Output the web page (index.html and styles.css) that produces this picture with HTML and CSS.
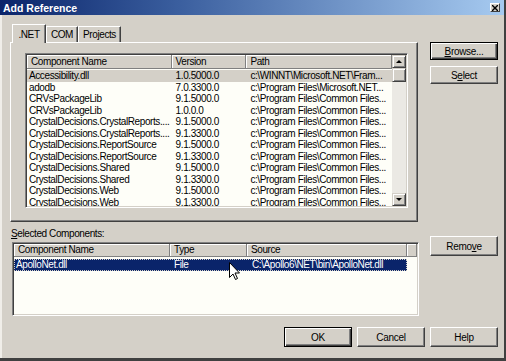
FILE: index.html
```html
<!DOCTYPE HTML>
<html>

<head>
  <meta charset="utf-8">
  <link rel="stylesheet" href="styles.css">
</head>

<body>
  <div class="window">
    <div class="titlebar">
      <span class="title">Add Reference</span>
      <span class="close">
        <svg width="6" height="6" viewBox="0 0 6 6"><path d="M0 0L6 6M6 0L0 6" stroke="#000" stroke-width="1.4"/></svg>
      </span>
    </div>

    <div class="content">
      <div class="top">
        <div class="tabs">
          <div class="tabstrip">
            <span class="tab active">.NET</span>
            <span class="tab com">COM</span>
            <span class="tab projects">Projects</span>
          </div>
          <div class="panel">
            <div class="list">
              <div class="listmain">
                <div class="row head">
                  <span class="c1">Component Name</span><span class="c2">Version</span><span class="c3">Path</span>
                </div>
                <div class="rows">
                  <div class="row grey"><span class="c1">Accessibility.dll</span><span class="c2">1.0.5000.0</span><span class="c3">c:\WINNT\Microsoft.NET\Fram...</span></div>
                  <div class="row"><span class="c1">adodb</span><span class="c2">7.0.3300.0</span><span class="c3">c:\Program Files\Microsoft.NET...</span></div>
                  <div class="row"><span class="c1">CRVsPackageLib</span><span class="c2">9.1.5000.0</span><span class="c3">c:\Program Files\Common Files...</span></div>
                  <div class="row"><span class="c1">CRVsPackageLib</span><span class="c2">1.0.0.0</span><span class="c3">c:\Program Files\Common Files...</span></div>
                  <div class="row"><span class="c1">CrystalDecisions.CrystalReports....</span><span class="c2">9.1.5000.0</span><span class="c3">c:\Program Files\Common Files...</span></div>
                  <div class="row"><span class="c1">CrystalDecisions.CrystalReports....</span><span class="c2">9.1.3300.0</span><span class="c3">c:\Program Files\Common Files...</span></div>
                  <div class="row"><span class="c1">CrystalDecisions.ReportSource</span><span class="c2">9.1.5000.0</span><span class="c3">c:\Program Files\Common Files...</span></div>
                  <div class="row"><span class="c1">CrystalDecisions.ReportSource</span><span class="c2">9.1.3300.0</span><span class="c3">c:\Program Files\Common Files...</span></div>
                  <div class="row"><span class="c1">CrystalDecisions.Shared</span><span class="c2">9.1.5000.0</span><span class="c3">c:\Program Files\Common Files...</span></div>
                  <div class="row"><span class="c1">CrystalDecisions.Shared</span><span class="c2">9.1.3300.0</span><span class="c3">c:\Program Files\Common Files...</span></div>
                  <div class="row"><span class="c1">CrystalDecisions.Web</span><span class="c2">9.1.5000.0</span><span class="c3">c:\Program Files\Common Files...</span></div>
                  <div class="row"><span class="c1">CrystalDecisions.Web</span><span class="c2">9.1.3300.0</span><span class="c3">c:\Program Files\Common Files...</span></div>
                </div>
              </div>
              <div class="scrollbar">
                <div class="sbtn"><span class="tri up"></span></div>
                <div class="thumb"></div>
                <div class="track"></div>
                <div class="sbtn"><span class="tri down"></span></div>
              </div>
            </div>
          </div>
        </div>
        <div class="side side-top">
          <button class="btn short default"><u>B</u>rowse...</button>
          <button class="btn short">S<u>e</u>lect</button>
        </div>
      </div>

      <div class="middle">
        <div class="selected">
          <div class="label"><u>S</u>elected Components:</div>
          <div class="list list2">
            <div class="row head">
              <span class="d1">Component Name</span><span class="d2">Type</span><span class="d3">Source</span><span class="d4"></span>
            </div>
            <div class="rows2">
              <div class="row picked"><span class="d1">ApolloNet.dll</span><span class="d2">File</span><span class="d3">C:\Apollo6\NET\bin\ApolloNet.dll</span></div>
            </div>
          </div>
        </div>
        <div class="side side-mid">
          <button class="btn">Remo<u>v</u>e</button>
        </div>
      </div>

      <div class="footer">
        <button class="btn default">OK</button>
        <button class="btn">Cancel</button>
        <button class="btn">Help</button>
      </div>
    </div>

    <svg class="cursor" width="12" height="19" viewBox="0 0 12 19">
      <path d="M0.5 0.5V15.5L4 12L6.5 17.5L8.5 16.5L6 11H10.5Z" fill="#fff" stroke="#000" stroke-width="1"/>
    </svg>
  </div>
</body>

</html>
```

FILE: styles.css
```css
body {
    margin: 0;
    font-family: "Liberation Sans", Arial, sans-serif;
    font-size: 10px;
    letter-spacing: -0.4px;
    color: #000;
}

.window {
    position: relative;
    width: 506px;
    height: 361px;
    box-sizing: border-box;
    background: #d4d0c8;
    border-right: 2px solid #404040;
    border-bottom: 3px solid #404040;
    overflow: hidden;
}

/* title bar */
.titlebar {
    height: 15px;
    display: flex;
    align-items: center;
    justify-content: space-between;
    padding: 0 3px 0 3px;
    background: linear-gradient(to right, #0a246a, #3a5e9e 35%, #a6caf0);
}
.title {
    color: #fff;
    font-weight: bold;
    font-size: 10.5px;
    letter-spacing: 0;
}
.close {
    width: 10px;
    height: 9px;
    box-sizing: border-box;
    background: #d4d0c8;
    border: 1px solid;
    border-color: #fff #404040 #404040 #fff;
    display: flex;
    align-items: center;
    justify-content: center;
    margin-right: 1px;
}

.content {
    height: 343px;
    box-sizing: border-box;
    border-left: 2px solid #f0eee9;
    padding: 9px 0 0 8px;
}

.top, .middle {
    display: flex;
    gap: 12px;
}

.side {
    display: flex;
    flex-direction: column;
    gap: 6px;
}
.side-top {
    padding-top: 18px;
}
.side-mid {
    padding-top: 14px;
}

/* buttons */
.btn {
    width: 68px;
    height: 20px;
    padding: 0;
    background: #d4d0c8;
    border: 1px solid;
    border-color: #fff #404040 #404040 #fff;
    box-shadow: inset -1px -1px #808080;
    font-family: inherit;
    font-size: 10px;
    letter-spacing: -0.3px;
    color: #000;
}
.btn.short {
    height: 18px;
}
.btn.default {
    border-color: #000;
    box-shadow: inset 1px 1px #fff, inset -1px -1px #404040, inset -2px -2px #808080;
}
u {
    text-decoration: underline;
    text-underline-offset: 1px;
}

/* tabs */
.tabstrip {
    display: flex;
    align-items: flex-end;
    height: 18px;
    padding-left: 2px;
    position: relative;
    z-index: 1;
}
.tab {
    height: 16px;
    box-sizing: border-box;
    border: 1px solid;
    border-bottom: none;
    border-color: #fff #404040 transparent #fff;
    box-shadow: inset -1px 0 #808080;
    display: flex;
    align-items: center;
    justify-content: center;
}
.tab.active {
    width: 34px;
    height: 19px;
    margin-bottom: -1px;
    background: #d4d0c8;
}
.tab.com {
    width: 32px;
}
.tab.projects {
    width: 43px;
}

.panel {
    width: 408px;
    height: 180px;
    box-sizing: border-box;
    border: 1px solid;
    border-color: #fff #404040 #404040 #fff;
    box-shadow: inset -1px -1px #808080;
    padding: 10px 0 0 14px;
}

/* list views */
.list {
    width: 383px;
    height: 155px;
    box-sizing: border-box;
    border: 1px solid;
    border-color: #808080 #fff #fff #808080;
    box-shadow: inset 1px 1px #404040, inset -1px -1px #d4d0c8;
    background: #fefef8;
    padding: 1px;
    display: flex;
    overflow: hidden;
}
.listmain {
    flex: 1;
    overflow: hidden;
}
.row {
    display: flex;
    height: 11.5px;
    line-height: 11.5px;
    white-space: nowrap;
}
.row span {
    overflow: hidden;
    box-sizing: border-box;
    padding-left: 4px;
}
.row.head {
    height: 14px;
    line-height: 13px;
}
.row.head span {
    background: #d4d0c8;
    border-right: 1px solid #808080;
    border-bottom: 1px solid #808080;
    box-shadow: inset 1px 1px #fff;
}
.rows {
    padding-top: 1px;
}
.row.grey {
    background: #d4d0c8;
}
.c1 { width: 145px; }
.rows .c1 { padding-left: 2px; }
.c2 { width: 75px; }
.c3 { width: 146px; }

/* scrollbar */
.scrollbar {
    width: 14px;
    display: flex;
    flex-direction: column;
}
.sbtn, .thumb {
    height: 13px;
    box-sizing: border-box;
    background: #d4d0c8;
    border: 1px solid;
    border-color: #d4d0c8 #404040 #404040 #d4d0c8;
    box-shadow: inset 1px 1px #fff, inset -1px -1px #808080;
    display: flex;
    align-items: center;
    justify-content: center;
}
.thumb {
    height: 14px;
}
.track {
    flex: 1;
    background: #ebe9e4;
}
.tri {
    width: 0;
    height: 0;
    border-left: 3px solid transparent;
    border-right: 3px solid transparent;
}
.tri.up {
    border-bottom: 3px solid #000;
}
.tri.down {
    border-top: 3px solid #000;
}

/* selected components */
.selected {
    width: 408px;
    padding-top: 6px;
}
.label {
    height: 12px;
    line-height: 12px;
    padding-left: 1px;
    margin-bottom: 2px;
}
.list2 {
    width: 407px;
    height: 74px;
    margin-left: 2px;
    display: block;
}
.list2 .row.head {
    height: 13px;
    line-height: 12px;
}
.rows2 {
    padding-top: 2px;
}
.d1 { width: 156px; }
.d2 { width: 77px; }
.d3 { width: 160px; }
.d4 { flex: 1; }
.row.picked {
    width: 393px;
    height: 12px;
    line-height: 11px;
    box-sizing: border-box;
    background: #0a246a;
    color: #fff;
    outline: 1px dotted #d4d0c8;
    outline-offset: -1px;
}
.row.picked .d1 {
    padding-left: 2px;
}
.row.picked .d3 {
    padding-left: 5px;
}

.footer {
    display: flex;
    justify-content: flex-end;
    gap: 5px;
    padding: 11px 6px 0 0;
}

.cursor {
    position: absolute;
    left: 229px;
    top: 262px;
}
```
